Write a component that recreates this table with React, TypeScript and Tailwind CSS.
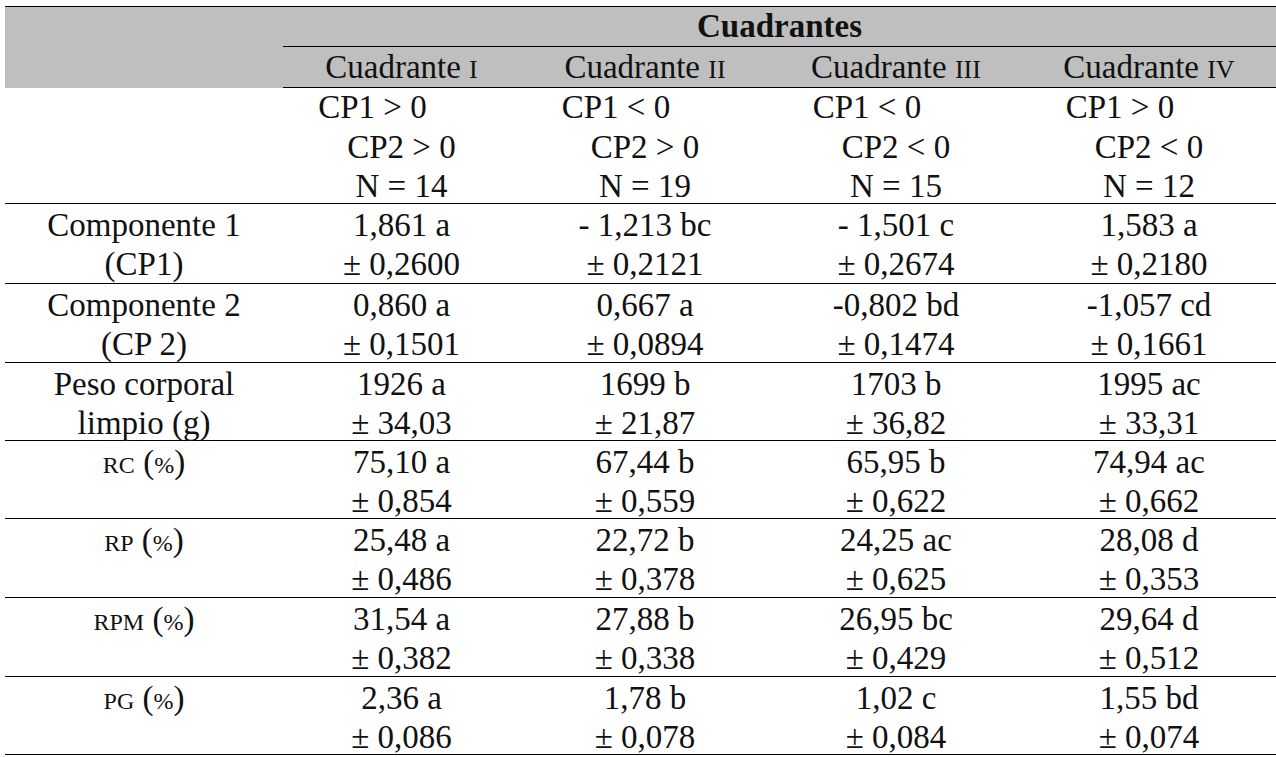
const COLS = "grid grid-cols-[278px_237px_250px_252px_254px]";

const QUADS = [
  { name: "I", cp1: "CP1 > 0", cp2: "CP2 > 0", n: "N = 14" },
  { name: "II", cp1: "CP1 < 0", cp2: "CP2 > 0", n: "N = 19" },
  { name: "III", cp1: "CP1 < 0", cp2: "CP2 < 0", n: "N = 15" },
  { name: "IV", cp1: "CP1 > 0", cp2: "CP2 < 0", n: "N = 12" },
];

type Row = {
  label: React.ReactNode;
  h: string;
  values: [string, string][];
};

const Pct = ({ name }: { name: string }) => (
  <span>
    <span className="text-[24px]">{name}</span>{" "}
    (<span className="text-[24px]">%</span>)
  </span>
);

const ROWS: Row[] = [
  {
    label: (
      <>
        <div>Componente 1</div>
        <div>(CP1)</div>
      </>
    ),
    h: "h-[80px]",
    values: [
      ["1,861 a", "± 0,2600"],
      ["- 1,213 bc", "± 0,2121"],
      ["- 1,501 c", "± 0,2674"],
      ["1,583 a", "± 0,2180"],
    ],
  },
  {
    label: (
      <>
        <div>Componente 2</div>
        <div>(CP 2)</div>
      </>
    ),
    h: "h-[79px]",
    values: [
      ["0,860 a", "± 0,1501"],
      ["0,667 a", "± 0,0894"],
      ["-0,802 bd", "± 0,1474"],
      ["-1,057 cd", "± 0,1661"],
    ],
  },
  {
    label: (
      <>
        <div>Peso corporal</div>
        <div>limpio (g)</div>
      </>
    ),
    h: "h-[78px]",
    values: [
      ["1926 a", "± 34,03"],
      ["1699 b", "± 21,87"],
      ["1703 b", "± 36,82"],
      ["1995 ac", "± 33,31"],
    ],
  },
  {
    label: <Pct name="RC" />,
    h: "h-[78px]",
    values: [
      ["75,10 a", "± 0,854"],
      ["67,44 b", "± 0,559"],
      ["65,95 b", "± 0,622"],
      ["74,94 ac", "± 0,662"],
    ],
  },
  {
    label: <Pct name="RP" />,
    h: "h-[79px]",
    values: [
      ["25,48 a", "± 0,486"],
      ["22,72 b", "± 0,378"],
      ["24,25 ac", "± 0,625"],
      ["28,08 d", "± 0,353"],
    ],
  },
  {
    label: <Pct name="RPM" />,
    h: "h-[79px]",
    values: [
      ["31,54 a", "± 0,382"],
      ["27,88 b", "± 0,338"],
      ["26,95 bc", "± 0,429"],
      ["29,64 d", "± 0,512"],
    ],
  },
  {
    label: <Pct name="PG" />,
    h: "h-[78px]",
    values: [
      ["2,36 a", "± 0,086"],
      ["1,78 b", "± 0,078"],
      ["1,02 c", "± 0,084"],
      ["1,55 bd", "± 0,074"],
    ],
  },
];

export default function App() {
  return (
    <div className="min-h-screen bg-white pt-[6px] pl-[5px] [font-family:'Liberation_Serif',serif] text-[33px] leading-[39px] text-[#111]">
      <div className="w-[1271px]">
        {/* header */}
        <div className={`${COLS} border-t border-black bg-[#bfbfbf]`}>
          <div className="row-span-2" />
          <div className="col-span-4 h-[40px] border-b border-black text-center font-bold">
            Cuadrantes
          </div>
          {QUADS.map((q) => (
            <div
              key={q.name}
              className="h-[41px] border-b border-black pt-[1px] text-center"
            >
              Cuadrante <span className="text-[26px]">{q.name}</span>
            </div>
          ))}
        </div>

        <div className={`${COLS} h-[116px] border-b border-black`}>
          <div />
          {QUADS.map((q) => (
            <div key={q.name} className="text-center leading-[39.5px]">
              <div className="pr-[58px]">{q.cp1}</div>
              <div>{q.cp2}</div>
              <div>{q.n}</div>
            </div>
          ))}
        </div>

        {/* data */}
        {ROWS.map((r, i) => (
          <div
            key={i}
            className={`${COLS} ${r.h} border-b border-black pt-[2px]`}
          >
            <div className="text-center">{r.label}</div>
            {r.values.map(([v, sd], j) => (
              <div key={j} className="text-center">
                <div>{v}</div>
                <div>{sd}</div>
              </div>
            ))}
          </div>
        ))}
      </div>
    </div>
  );
}
